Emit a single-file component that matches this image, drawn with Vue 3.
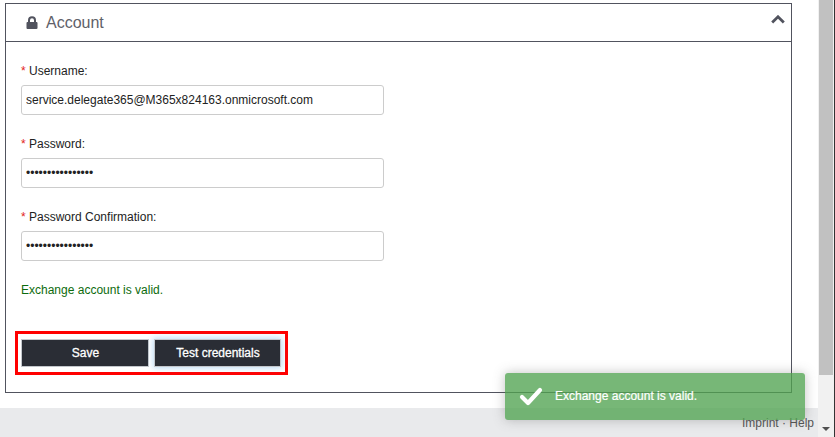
<template>
  <div class="page">
    <div class="content">
      <section class="panel">
        <header class="panel-head">
          <svg class="lock" viewBox="0 0 12 14" width="12" height="14">
            <path d="M2 6V4.200a4 4 0 0 1 8 0V6h.6c.5 0 .9.4.9.9v5.200c0 .5-.4.9-.9.9H1.400c-.5 0-.9-.4-.9-.9V6.900c0-.5.4-.9.9-.9zm2 0h4V4.200a2 2 0 0 0-4 0z" fill="#51535e" />
          </svg>
          <span class="panel-title">Account</span>
          <svg class="chevron" viewBox="0 0 14 9" width="14" height="9">
            <path d="M1.200 7.500 7 1.800l5.800 5.700" fill="none" stroke="#51535e" stroke-width="2.800" />
          </svg>
        </header>
        <div class="panel-body">
          <div v-for="field in fields" :key="field.label" class="field">
            <label><span class="req">*</span> {{ field.label }}:</label>
            <input :type="field.type" :value="field.value" readonly />
          </div>
          <p class="valid">Exchange account is valid.</p>
          <div class="actions">
            <button class="btn">Save</button>
            <button class="btn btn-focus">Test credentials</button>
          </div>
        </div>
      </section>
      <footer class="footer">
        <span class="links">Imprint · Help</span>
      </footer>
    </div>
    <div class="scrollbar">
      <div class="thumb"></div>
      <div class="arrow"></div>
    </div>
    <div class="toast">
      <svg class="check" viewBox="0 0 24 20" width="24" height="20">
        <path d="M3 11l6 6L21 4" fill="none" stroke="#fff" stroke-width="4.200" stroke-linecap="round" stroke-linejoin="round" />
      </svg>
      <span>Exchange account is valid.</span>
    </div>
  </div>
</template>

<script setup>
const fields = [
  { label: 'Username', type: 'text', value: 'service.delegate365@M365x824163.onmicrosoft.com' },
  { label: 'Password', type: 'password', value: 'aaaaaaaaaaaaaaaa' },
  { label: 'Password Confirmation', type: 'password', value: 'aaaaaaaaaaaaaaaa' }
]
</script>

<style>
html, body {
  margin: 0;
  overflow: hidden;
}
</style>

<style scoped>
.page {
  position: relative;
  display: flex;
  width: 835px;
  height: 437px;
  overflow: hidden;
  background: #fff;
  font-family: "Liberation Sans", Arial, sans-serif;
  font-size: 12px;
  color: #222;
}

.content {
  flex: 1;
  min-width: 0;
  display: flex;
  flex-direction: column;
  padding-top: 3px;
}

.panel {
  width: 787px;
  height: 390px;
  box-sizing: border-box;
  margin-left: 5px;
  border: 1px solid #51535e;
}

.panel-head {
  display: flex;
  align-items: center;
  height: 35px;
  padding: 0 6px 2px 20px;
  border-bottom: 1px solid #51535e;
}

.lock {
  margin-right: 8px;
  margin-top: 2px;
}

.panel-title {
  flex: 1;
  margin-top: 2px;
  font-size: 16px;
  color: #5f6169;
}

.chevron {
  margin-top: -4px;
}

.panel-body {
  padding: 22px 15px 0;
}

.field {
  margin-bottom: 22px;
}

.field label {
  display: block;
  height: 15px;
  line-height: 15px;
  margin-bottom: 6px;
}

.req {
  color: #e2231a;
}

.field input {
  display: block;
  width: 363px;
  height: 30px;
  box-sizing: border-box;
  padding: 0 4px;
  border: 1px solid #ccc;
  border-radius: 3px;
  font: 12px "Liberation Sans", Arial, sans-serif;
  color: #222;
  background: #fff;
  outline: none;
}

.valid {
  margin: 0;
  line-height: 15px;
  color: #0d6b0d;
}

.actions {
  display: flex;
  gap: 5px;
  width: 273px;
  box-sizing: border-box;
  margin: 33px 0 0 -6px;
  padding: 5px 3px;
  border: 3px solid #f00;
}

.btn {
  width: 128px;
  height: 28px;
  box-sizing: border-box;
  padding: 0 0 0 1px;
  border: 1px solid #c3c7cc;
  background: #2a2d35;
  color: #fff;
  font: 12px "Liberation Sans", Arial, sans-serif;
  -webkit-text-stroke: 0.3px #fff;
}

.btn-focus {
  width: 127px;
  box-shadow: 0 0 6px 1px rgba(102, 175, 233, 0.45);
}

.footer {
  position: relative;
  height: 29px;
  margin-top: 15px;
  background: #e9eaec;
}

.links {
  position: absolute;
  right: 4px;
  bottom: 7px;
  color: #555;
}

.scrollbar {
  position: relative;
  width: 17px;
  box-sizing: border-box;
  background: #f1f1f1;
  border-right: 1px solid #333;
}

.thumb {
  height: 375px;
  margin: 0 1px;
  background: #c1c1c1;
}

.arrow {
  position: absolute;
  left: 4px;
  bottom: 6px;
  border-left: 4px solid transparent;
  border-right: 4px solid transparent;
  border-top: 4px solid #505050;
}

.toast {
  position: absolute;
  left: 505px;
  top: 373px;
  width: 300px;
  height: 47px;
  display: flex;
  align-items: center;
  gap: 12px;
  box-sizing: border-box;
  padding: 0 0 1px 14px;
  border-radius: 3px;
  background: rgba(81, 163, 81, 0.78);
  box-shadow: 0 0 12px rgba(80, 80, 80, 0.35);
  color: #fff;
  -webkit-text-stroke: 0.2px #fff;
}
</style>
